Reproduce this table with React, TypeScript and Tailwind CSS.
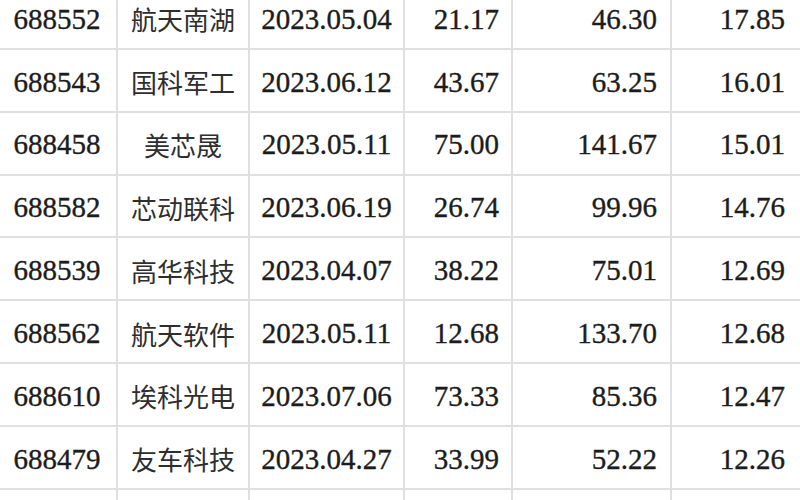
import React from "react";

// one row per listed stock: code, name, listing date, then three figures
const ROWS: string[][] = [
  ["688552", "航天南湖", "2023.05.04", "21.17", "46.30", "17.85"],
  ["688543", "国科军工", "2023.06.12", "43.67", "63.25", "16.01"],
  ["688458", "美芯晟", "2023.05.11", "75.00", "141.67", "15.01"],
  ["688582", "芯动联科", "2023.06.19", "26.74", "99.96", "14.76"],
  ["688539", "高华科技", "2023.04.07", "38.22", "75.01", "12.69"],
  ["688562", "航天软件", "2023.05.11", "12.68", "133.70", "12.68"],
  ["688610", "埃科光电", "2023.07.06", "73.33", "85.36", "12.47"],
  ["688479", "友车科技", "2023.04.27", "33.99", "52.22", "12.26"],
  ["", "", "", "", "", ""],
];

const NUM =
  "font-['Liberation_Serif',serif] text-[29px] text-[#1c1c1c] pt-[4px] [-webkit-text-stroke:0.35px_#1c1c1c]";
const CJK = "font-['Noto_Sans_CJK_SC',sans-serif] text-[26px] text-[#2e2e2e] pt-[3px]";
const CELL = "flex items-center border-b-2 border-[#e0e0e0] whitespace-nowrap";

export default function App() {
  return (
    <div className="h-[500px] w-[800px] overflow-hidden bg-white">
      <div className="mt-[-13px] grid grid-cols-[116px_132px_155px_108px_159px_1fr] auto-rows-[62.857px]">
        {ROWS.map((r, i) => (
          <React.Fragment key={i}>
            <div className={`${CELL} ${NUM} justify-center pr-[2px]`}>{r[0]}</div>
            <div className={`${CELL} ${CJK} border-l-2 justify-center`}>{r[1]}</div>
            <div className={`${CELL} ${NUM} border-l-2 justify-center`}>{r[2]}</div>
            <div className={`${CELL} ${NUM} border-l-2 justify-end pr-[12px]`}>{r[3]}</div>
            <div className={`${CELL} ${NUM} border-l-2 justify-end pr-[13px]`}>{r[4]}</div>
            <div className={`${CELL} ${NUM} border-l-2 justify-end pr-[15px]`}>{r[5]}</div>
          </React.Fragment>
        ))}
      </div>
    </div>
  );
}
